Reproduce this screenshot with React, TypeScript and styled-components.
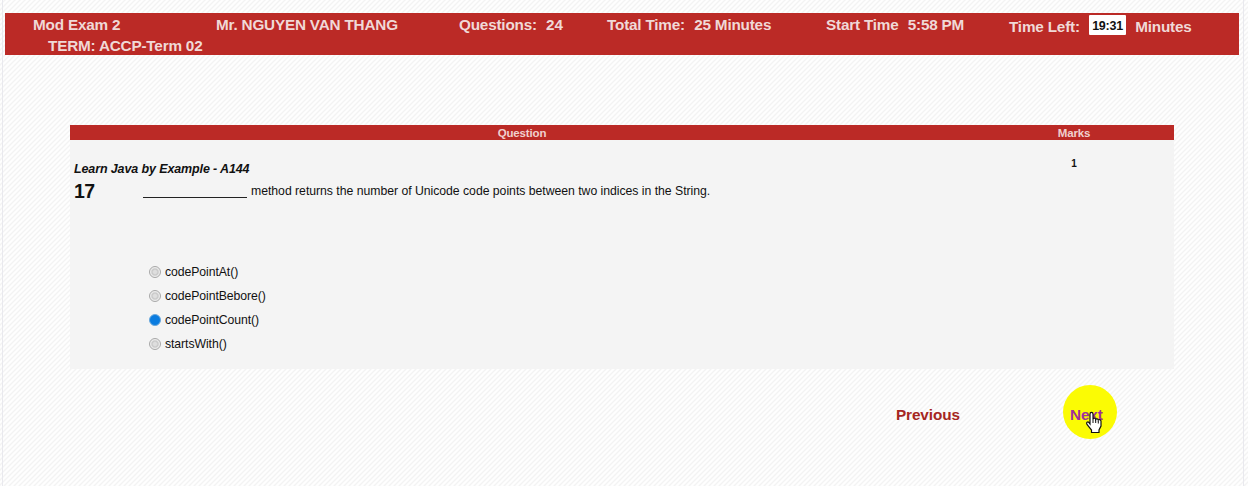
import React from "react";
import styled, { createGlobalStyle } from "styled-components";

const GlobalStyle = createGlobalStyle`
  * { box-sizing: border-box; }
  body { margin: 0; font-family: "Liberation Sans", Arial, sans-serif; color: #111; }
`;

const Page = styled.div`
  height: 486px;
  padding: 0 4px 0 2px;
  overflow: hidden;
  background-color: #fefefe;
  background-image: linear-gradient(135deg, #f3f3f3 0%, #fefefe 20% 30%, #f3f3f3 50%, #fefefe 70% 80%, #f3f3f3 100%);
  background-size: 5px 5px;
`;

const Frame = styled.div`
  height: 486px;
  padding: 13px 3px 0 2px;
  border-left: 1px solid #e9e9ee;
  border-right: 1px solid #e9e9ee;
`;

const Header = styled.header`
  height: 42px;
  margin-right: 1px;
  padding-top: 2px;
  background: #bb2a26;
  color: #f0d9d7;
  font-size: 15.3px;
  font-weight: bold;
  letter-spacing: -0.2px;
  line-height: 20px;
  white-space: nowrap;
`;

const HeaderRow = styled.div`
  display: flex;
  height: 21px;
`;

const HeaderItem = styled.div<{ $gap: number; $w: number; $drop?: number }>`
  display: flex;
  flex: none;
  width: ${(p) => p.$w}px;
  margin-left: ${(p) => p.$gap}px;
  padding-top: ${(p) => p.$drop ?? 0}px;
  gap: 9.2px;
`;

const Clock = styled.span`
  width: 37px;
  height: 20px;
  margin-top: -2px;
  border-radius: 1px;
  background: #fff;
  color: #111;
  font-size: 12.5px;
  letter-spacing: -0.25px;
  line-height: 22px;
  text-align: center;
`;

const Table = styled.main`
  width: 1104px;
  margin: 70px 0 0 65px;
`;

const TableHead = styled.div`
  display: grid;
  grid-template-columns: 904px 200px;
  height: 15px;
  background: #bb2a26;
  color: #f0d0ce;
  font-size: 11.5px;
  font-weight: bold;
  letter-spacing: -0.15px;
  line-height: 16px;
  text-align: center;
`;

const TableBody = styled.div`
  display: grid;
  grid-template-columns: 904px 200px;
  height: 229px;
  margin-bottom: 16px;
  background: #f4f4f4;
`;

const QuestionCell = styled.section`
  padding: 20px 0 0 4px;
`;

const Source = styled.div`
  font-size: 12.5px;
  font-style: italic;
  font-weight: bold;
  letter-spacing: -0.12px;
  line-height: 19px;
`;

const Prompt = styled.div`
  display: flex;
  height: 25px;
  font-size: 12.25px;
  letter-spacing: -0.03px;
  line-height: 24px;
  white-space: nowrap;
`;

const Num = styled.b`
  width: 69px;
  font-size: 19.5px;
  letter-spacing: -0.5px;
`;

const Blank = styled.span`
  width: 104px;
  height: 19px;
  margin-right: 4px;
  border-bottom: 1px solid #222;
`;

const Options = styled.div`
  padding: 55.4px 0 0 75px;
`;

const Option = styled.label`
  display: flex;
  align-items: center;
  height: 24.3px;
  gap: 4px;
  font-size: 12.25px;
  letter-spacing: -0.08px;
`;

const Radio = styled.span<{ $on: boolean }>`
  width: 12px;
  height: 12px;
  border-radius: 50%;
  border: 1px solid ${(p) => (p.$on ? "#6aa8dc" : "#a8a8a8")};
  background: ${(p) => (p.$on ? "#0a7ce0" : "radial-gradient(circle, #dedede 0 1.5px, #c8c8c8 3px, #ededed 4.5px)")};
`;

const Marks = styled.div`
  padding-top: 18px;
  font-size: 10px;
  font-weight: bold;
  line-height: 12px;
  text-align: center;
`;

const Nav = styled.nav`
  display: flex;
  align-items: center;
  height: 54px;
  margin-left: 891px;
  font-size: 15.3px;
  font-weight: bold;
  letter-spacing: -0.1px;
  color: #a52622;
`;

const NavLink = styled.a`
  width: 167px;
  padding-top: 5px;
`;

const Highlight = styled.a`
  position: relative;
  width: 54px;
  height: 54px;
  padding: 5px 0 0 7px;
  border-radius: 50%;
  background: #fbfb04;
  color: #a0309a;
  line-height: 49px;
`;

const Pointer = styled.svg`
  position: absolute;
  left: 22px;
  top: 26px;
`;

const options = ["codePointAt()", "codePointBebore()", "codePointCount()", "startsWith()"];

export default function App() {
  return (
    <Page>
      <GlobalStyle />
      <Frame>
        <Header>
          <HeaderRow>
            <HeaderItem $gap={28} $w={183}>Mod Exam 2</HeaderItem>
            <HeaderItem $gap={0} $w={243}>Mr. NGUYEN VAN THANG</HeaderItem>
            <HeaderItem $gap={0} $w={148}><span>Questions:</span><span>24</span></HeaderItem>
            <HeaderItem $gap={0} $w={219}><span>Total Time:</span><span>25 Minutes</span></HeaderItem>
            <HeaderItem $gap={0} $w={183}><span>Start Time</span><span>5:58 PM</span></HeaderItem>
            <HeaderItem $gap={0} $w={190} $drop={2}><span>Time Left:</span><Clock>19:31</Clock><span>Minutes</span></HeaderItem>
          </HeaderRow>
          <HeaderRow><HeaderItem $gap={43} $w={200}>TERM: ACCP-Term 02</HeaderItem></HeaderRow>
        </Header>
        <Table>
          <TableHead><span>Question</span><span>Marks</span></TableHead>
          <TableBody>
            <QuestionCell>
              <Source>Learn Java by Example - A144</Source>
              <Prompt><Num>17</Num><Blank /><span>method returns the number of Unicode code points between two indices in the String.</span></Prompt>
              <Options>
                {options.map((o, i) => <Option key={o}><Radio $on={i === 2} />{o}</Option>)}
              </Options>
            </QuestionCell>
            <Marks>1</Marks>
          </TableBody>
        </Table>
        <Nav>
          <NavLink>Previous</NavLink>
          <Highlight>
            Next
            <Pointer width="18" height="23" viewBox="0 0 18 23">
              <path d="M5 13V3.2C5 .8 8 .8 8 3.2V8c.5-1.200 2.600-1 2.700.5.6-1.200 2.500-.8 2.600.6.900-1 2.700-.3 2.700 1.200V15l-2 4v2.500H6.500V19L2 13.500c-1.300-2 .8-3.300 2-1.800z" fill="#fff" stroke="#111" strokeWidth="1.200" />
              <path d="M8 8v4M10.700 9v3M13.300 10v2.500" stroke="#111" fill="none" />
            </Pointer>
          </Highlight>
        </Nav>
      </Frame>
    </Page>
  );
}
